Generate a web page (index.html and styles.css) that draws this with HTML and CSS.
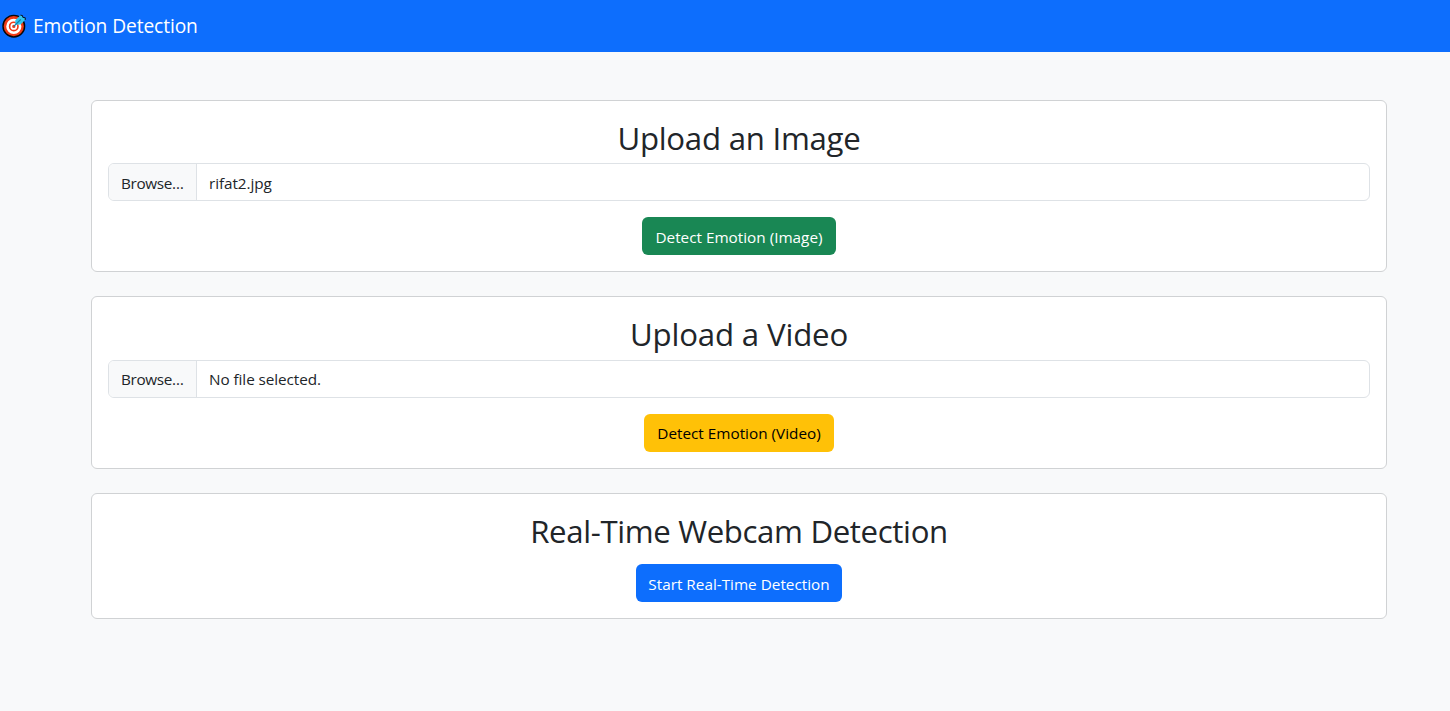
FILE: index.html
```html
<!DOCTYPE html>
<html lang="en">
<head>
<meta charset="utf-8">
<title>Emotion Detection</title>
<link rel="stylesheet" href="styles.css">
</head>
<body>
<nav class="navbar">
  <svg class="logo" viewBox="0 0 24 24" aria-hidden="true">
    <circle cx="11.8" cy="12.2" r="10.8" fill="#f03a17" stroke="#080808" stroke-width="1.4"/>
    <circle cx="11.8" cy="12.4" r="6.3" fill="#f03a17" stroke="#fff" stroke-width="2.6"/>
    <circle cx="11.8" cy="12.4" r="2.5" fill="#f03a17" stroke="#fff" stroke-width="1.7"/>
    <path d="M13.3 9.8V6.2L18.4 1.2 20.1 1.7 20.6 3.4 23.4 4 23 6.1 18.6 10.4 14.6 10.8Z" fill="#31c5ed"/>
    <path d="M18.4 1.2 20.4 1.5 20.8 3.3 23.3 3.8 23.2 6" fill="none" stroke="#080808" stroke-width=".9"/>
    <path d="M11.8 12.4 18.8 5.4" stroke="#087fa8" stroke-width="1.3"/>
  </svg>
  <a class="brand">Emotion Detection</a>
</nav>
<main class="container">
  <section class="card">
    <h2 class="title title-image">Upload an Image</h2>
    <div class="file"><span class="browse">Browse…</span><span class="filename">rifat2.jpg</span></div>
    <button class="btn btn-success">Detect Emotion (Image)</button>
  </section>
  <section class="card card-video">
    <h2 class="title title-video">Upload a Video</h2>
    <div class="file"><span class="browse">Browse…</span><span class="filename">No file selected.</span></div>
    <button class="btn btn-warning">Detect Emotion (Video)</button>
  </section>
  <section class="card">
    <h2 class="title title-webcam">Real-Time Webcam Detection</h2>
    <button class="btn btn-primary">Start Real-Time Detection</button>
  </section>
</main>
</body>
</html>
```
FILE: styles.css
```css
* { box-sizing: border-box; }
body {
  margin: 0;
  min-height: 711px;
  background: #f8f9fa;
  color: #212529;
  font: 400 15.3px/24px "Open Sans", "Noto Sans", sans-serif;
}
.navbar {
  display: flex;
  align-items: center;
  height: 52px;
  padding-left: 2px;
  background: #0d6efd;
}
.logo { width: 24px; height: 24px; margin-right: 7px; }
.brand { color: #fff; font-size: 19.2px; line-height: 30px; letter-spacing: -0.1px; }
.container {
  display: flex;
  flex-direction: column;
  gap: 24px;
  width: 1296px;
  margin: 48px 0 0 91px;
}
.card {
  display: flex;
  flex-direction: column;
  align-items: center;
  padding: 16px;
  background: #fff;
  border: 1px solid #d0d2d4;
  border-radius: 6px;
}
.title {
  margin: 0 0 8px;
  padding-top: 2px;
  height: 38.4px;
  font-size: 31.2px;
  font-weight: 400;
  line-height: 38.4px;
  white-space: nowrap;
}
.title-image { letter-spacing: -0.25px; }
.title-video { letter-spacing: -0.15px; }
.title-webcam { letter-spacing: -0.35px; }
.file {
  display: flex;
  align-self: stretch;
  height: 38px;
  margin-bottom: 16px;
  border: 1px solid #dee2e6;
  border-radius: 6px;
  overflow: hidden;
}
.browse {
  width: 88px;
  padding: 7px 0 5px 12px;
  background: #f8f9fa;
  border-right: 1px solid #dee2e6;
  letter-spacing: -0.35px;
}
.filename { padding: 7px 12px 5px; letter-spacing: -0.07px; }
.card-video .browse, .card-video .filename { padding-top: 6px; }
.btn {
  height: 38px;
  padding: 8px 0 6px;
  border: 0;
  border-radius: 6px;
  font: inherit;
  white-space: nowrap;
}
.btn-success { width: 194px; background: #198754; color: #fff; }
.btn-warning { width: 190px; padding: 7px 0; background: #ffc107; color: #000; }
.btn-primary { width: 206px; margin-top: 8px; background: #0d6efd; color: #fff; }
```
